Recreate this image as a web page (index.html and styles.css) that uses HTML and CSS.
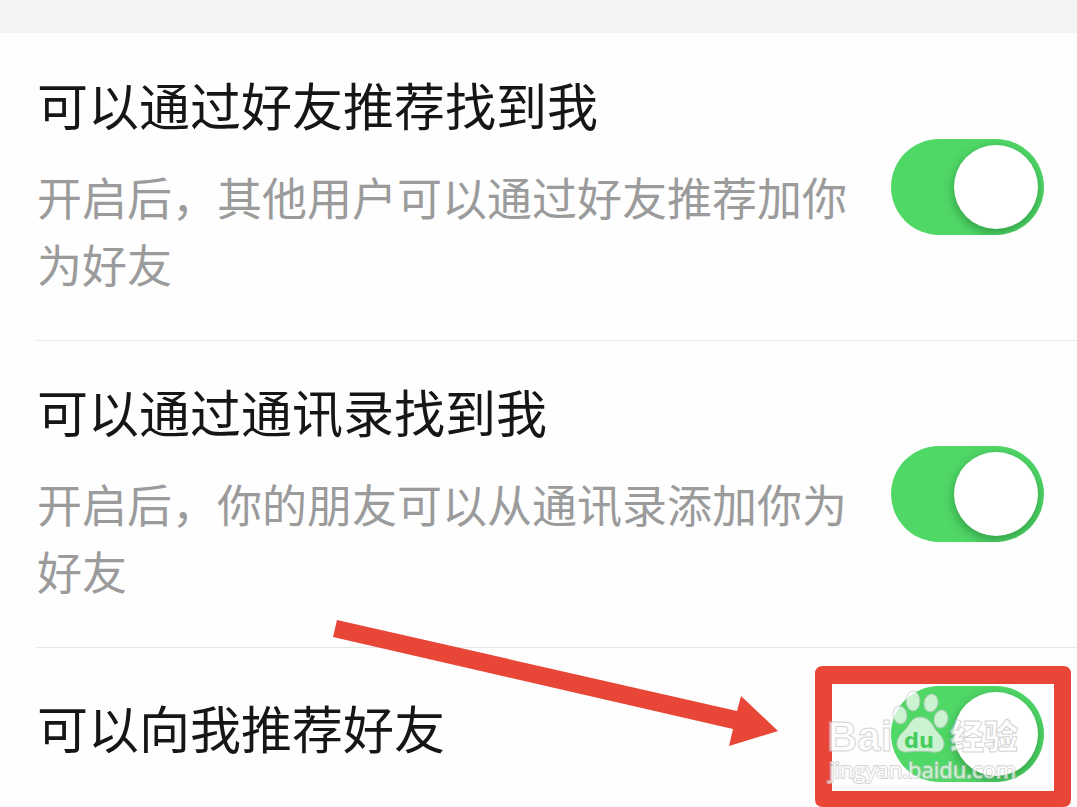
FILE: index.html
```html
<!DOCTYPE html>
<html lang="zh-CN">
<head>
<meta charset="utf-8">
<meta name="viewport" content="width=device-width, initial-scale=1">
<title>隐私设置</title>
<link rel="stylesheet" href="styles.css">
</head>
<body>
<main class="settings">
  <div class="row">
    <div class="text">
      <label class="title" for="by-friend">可以通过好友推荐找到我</label>
      <p class="desc" id="by-friend-desc">开启后，其他用户可以通过好友推荐加你为好友</p>
    </div>
    <input class="switch" type="checkbox" role="switch" id="by-friend" aria-describedby="by-friend-desc" checked>
  </div>
  <div class="row">
    <div class="text">
      <label class="title" for="by-contacts">可以通过通讯录找到我</label>
      <p class="desc" id="by-contacts-desc">开启后，你的朋友可以从通讯录添加你为好友</p>
    </div>
    <input class="switch" type="checkbox" role="switch" id="by-contacts" aria-describedby="by-contacts-desc" checked>
  </div>
  <div class="row row-single">
    <div class="text">
      <label class="title" for="suggest">可以向我推荐好友</label>
    </div>
    <input class="switch" type="checkbox" role="switch" id="suggest" checked>
    <svg class="callout" width="757" height="207" viewBox="320 600 757 207">
      <path class="mark" d="M337 620 L737 711 L741 696 L778 731 L729 746 L733 729 L333 637 Z"/>
      <path class="mark" fill-rule="evenodd" d="M823 666 H1063 Q1071 666 1071 674 V799 Q1071 807 1063 807 H823 Q815 807 815 799 V674 Q815 666 823 666 Z M832 684 V791 H1054 V684 Z"/>
      <g class="watermark">
        <text class="wm-latin" x="827" y="751">Bai</text>
        <ellipse cx="900" cy="715" rx="7" ry="9" transform="rotate(-10 900 715)"/>
        <ellipse cx="913" cy="701" rx="7" ry="10"/>
        <ellipse cx="931" cy="703" rx="7" ry="9" transform="rotate(12 931 703)"/>
        <ellipse cx="941" cy="719" rx="7" ry="9" transform="rotate(12 941 719)"/>
        <path d="M920 717 C928 717 932 723 935 729 C939 734 944 738 944 744 C944 751 938 753 932 752 C924 751 916 751 908 752 C901 753 896 749 897 742 C898 735 904 732 908 726 C911 721 914 717 920 717 Z"/>
        <text class="wm-cjk" x="950" y="749">经验</text>
        <text class="wm-url" x="829" y="778">jingyan.baidu.com</text>
      </g>
      <text class="wm-du" x="904" y="748">du</text>
    </svg>
  </div>
</main>
</body>
</html>
```
FILE: styles.css
```css
* {
  box-sizing: border-box;
}

body {
  margin: 0;
  background: #fefefe;
  font-family: "Noto Sans CJK SC", sans-serif;
}

.settings {
  padding-top: 1px;
  border-top: 33px solid #f3f3f3;
}

.row {
  position: relative;
  display: flex;
  align-items: center;
  gap: 36px;
  margin-left: 37px;
  padding-right: 33px;
  border-bottom: 1px solid #e6e6e6;
}

.text {
  flex: 1;
  padding: 32px 0 43px;
}

.row-single {
  padding: 38px 33px 25px 0;
  border-bottom: 0;
}

.row-single .text {
  padding: 0 0 14px;
}

.title {
  display: block;
  color: #161616;
  font-size: 51px;
  line-height: 76px;
}

.desc {
  margin: 21px 0 0;
  color: #9b9b9b;
  font-size: 45px;
  line-height: 67px;
}

.switch {
  flex: none;
  appearance: none;
  width: 153px;
  height: 96px;
  margin: 0;
  padding: 6px;
  overflow: hidden;
  border-radius: 48px;
  background: #50d867;
}

.switch::before {
  content: "";
  display: block;
  width: 84px;
  height: 84px;
  border-radius: 50%;
  background: #fff;
  box-shadow: 0 4px 12px rgba(0, 60, 20, 0.4);
}

.switch:checked::before {
  margin-left: auto;
}

.callout {
  position: absolute;
  right: 0;
  bottom: 0;
  pointer-events: none;
}

.mark {
  fill: #e84637;
}

.watermark {
  fill: #fff;
  stroke: #c4c4c4;
  stroke-width: 1px;
  opacity: 0.7;
}

.wm-latin {
  font: bold 42px "Liberation Sans", sans-serif;
}

.wm-cjk {
  font: 900 34px "Noto Sans CJK SC", sans-serif;
}

.wm-url {
  font: 22px "Open Sans", sans-serif;
  stroke-width: 2px;
  paint-order: stroke;
}

.wm-du {
  fill: #48cc60;
  font: bold 21px "DejaVu Sans", sans-serif;
}
```
